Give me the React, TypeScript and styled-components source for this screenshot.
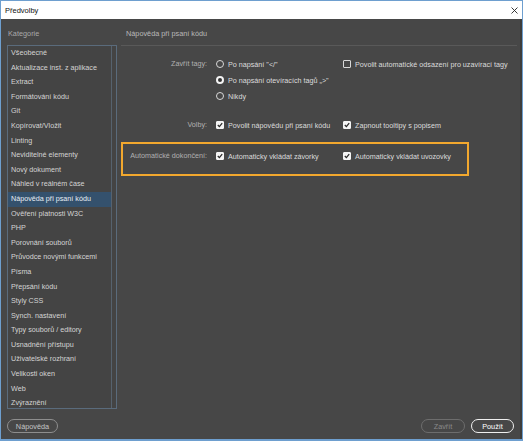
import styled, { createGlobalStyle } from "styled-components";

const GlobalStyle = createGlobalStyle`
  html, body {
    margin: 0;
    padding: 0;
    background: #474747;
  }
  body {
    font-family: "Liberation Sans", Arial, sans-serif;
  }
`;

const Window = styled.div`
  width: 523px;
  height: 441px;
  box-sizing: border-box;
  border: 1px solid #6e9fcf;
  border-bottom-width: 2px;
  display: flex;
  flex-direction: column;
  background: #474747;
`;

const TitleBar = styled.div`
  height: 18px;
  flex: none;
  background: #ffffff;
  display: flex;
  align-items: center;
  justify-content: space-between;
  padding: 0 4px;
  font-size: 7.5px;
  color: #111;
`;

const Body = styled.div`
  flex: 1;
  display: flex;
  flex-direction: column;
  padding: 7px 6px 6px 6px;
  min-height: 0;
  border-right: 2px solid #3d3d3d;
`;

const Columns = styled.div`
  display: grid;
  grid-template-columns: 110px 1fr;
  column-gap: 4px;
`;

const HeaderRow = styled(Columns)`
  height: 14px;
  margin-bottom: 5px;
  align-items: center;
  font-size: 7.3px;
  color: #a9a9a9;
`;

const CategoryTitle = styled.div`
  padding-left: 1px;
`;

const PanelTitle = styled.div`
  padding-left: 5px;
  color: #b9b9b9;
`;

const Main = styled(Columns)`
  flex: 1;
  min-height: 0;
`;

const List = styled.div`
  border: 1px solid #5a6b7c;
  box-shadow: inset -4px 0 0 #444, inset -5px 0 0 #56626e;
  background: #444444;
  overflow: hidden;
`;

const Item = styled.div<{ $selected?: boolean }>`
  height: 14.6px;
  line-height: 14.6px;
  margin-right: 5px;
  padding-left: 3px;
  font-size: 7.2px;
  white-space: nowrap;
  color: ${(p) => (p.$selected ? "#e8eef4" : "#d4d4d4")};
  background: ${(p) => (p.$selected ? "#34516d" : "transparent")};
`;

const Panel = styled.div`
  border-top: 1px solid #595959;
  padding-top: 8px;
  display: flex;
  flex-direction: column;
`;

const Row = styled.div<{ $highlight?: boolean }>`
  display: grid;
  grid-template-columns: 77px 118px 1fr;
  column-gap: 9px;
  border: 2px solid ${(p) => (p.$highlight ? "#f2a82e" : "transparent")};
  padding: ${(p) => (p.$highlight ? "4px 7px 10px" : "0 7px")};
  width: ${(p) => (p.$highlight ? "348px" : "auto")};
  box-sizing: border-box;
  margin-top: ${(p) => (p.$highlight ? "7px" : "0")};
`;

const Label = styled.div`
  text-align: right;
  font-size: 7.2px;
  line-height: 16px;
  color: #b1b1b1;
  white-space: nowrap;
`;

const Stack = styled.div`
  display: flex;
  flex-direction: column;
`;

const Option = styled.div`
  display: flex;
  align-items: center;
  height: 16px;
  gap: 4px;
  font-size: 7.2px;
  color: #dcdcdc;
  white-space: nowrap;
`;

const Spacer = styled.div`
  height: 9px;
`;

const RadioMark = styled.span<{ $on?: boolean }>`
  width: 8px;
  height: 8px;
  border-radius: 50%;
  box-sizing: border-box;
  border: ${(p) => (p.$on ? "2.5px solid #f4f4f4" : "1px solid #d8d8d8")};
  background: ${(p) => (p.$on ? "#333" : "transparent")};
  flex: none;
`;

const BoxMark = styled.span<{ $on?: boolean }>`
  width: 8px;
  height: 8px;
  border-radius: 1px;
  box-sizing: border-box;
  border: 1px solid ${(p) => (p.$on ? "#f4f4f4" : "#d8d8d8")};
  background: ${(p) => (p.$on ? "#f4f4f4" : "transparent")};
  display: flex;
  align-items: center;
  justify-content: center;
  flex: none;
`;

const Footer = styled.div`
  margin-top: 10px;
  height: 14px;
  display: flex;
  align-items: center;
  gap: 6px;
`;

const Pill = styled.button<{ $primary?: boolean; $disabled?: boolean; $w: number }>`
  width: ${(p) => p.$w}px;
  height: 14px;
  padding: 0;
  border-radius: 7px;
  background: transparent;
  font-family: inherit;
  font-size: 7.3px;
  border: ${(p) =>
    p.$primary ? "1.5px solid #f0f0f0" : p.$disabled ? "1px solid #6d6d6d" : "1px solid #8e8e8e"};
  color: ${(p) => (p.$primary ? "#ffffff" : p.$disabled ? "#8a8a8a" : "#c4c4c4")};
`;

const Grow = styled.div`
  flex: 1;
`;

const categories = [
  "Všeobecné",
  "Aktualizace inst. z aplikace",
  "Extract",
  "Formátování kódu",
  "Git",
  "Kopírovat/Vložit",
  "Linting",
  "Neviditelné elementy",
  "Nový dokument",
  "Náhled v reálném čase",
  "Nápověda při psaní kódu",
  "Ověření platnosti W3C",
  "PHP",
  "Porovnání souborů",
  "Průvodce novými funkcemi",
  "Písma",
  "Přepsání kódu",
  "Styly CSS",
  "Synch. nastavení",
  "Typy souborů / editory",
  "Usnadnění přístupu",
  "Uživatelské rozhraní",
  "Velikosti oken",
  "Web",
  "Zvýraznění",
];

function Check({ on, children }: { on?: boolean; children: string }) {
  return (
    <Option>
      <BoxMark $on={on}>
        {on && (
          <svg width="6" height="6" viewBox="0 0 6 6">
            <polyline points="0.8,3 2.4,4.6 5.2,1.2" fill="none" stroke="#2a2a2a" strokeWidth="1.3" />
          </svg>
        )}
      </BoxMark>
      {children}
    </Option>
  );
}

function Radio({ on, children }: { on?: boolean; children: string }) {
  return (
    <Option>
      <RadioMark $on={on} />
      {children}
    </Option>
  );
}

export default function App() {
  return (
    <>
      <GlobalStyle />
      <Window>
        <TitleBar>
          <span>Předvolby</span>
          <svg width="7" height="7" viewBox="0 0 7 7">
            <path d="M0.5 0.5 L6.5 6.5 M6.5 0.5 L0.5 6.5" stroke="#222" strokeWidth="0.9" />
          </svg>
        </TitleBar>
        <Body>
          <HeaderRow>
            <CategoryTitle>Kategorie</CategoryTitle>
            <PanelTitle>Nápověda při psaní kódu</PanelTitle>
          </HeaderRow>
          <Main>
            <List>
              {categories.map((c) => (
                <Item key={c} $selected={c === "Nápověda při psaní kódu"}>
                  {c}
                </Item>
              ))}
            </List>
            <Panel>
              <Row>
                <Label>Zavřít tagy:</Label>
                <Stack>
                  <Radio>Po napsání "&lt;/"</Radio>
                  <Radio on>Po napsání otevíracích tagů „&gt;"</Radio>
                  <Radio>Nikdy</Radio>
                </Stack>
                <Stack>
                  <Check>Povolit automatické odsazení pro uzavírací tagy</Check>
                </Stack>
              </Row>
              <Spacer />
              <Row>
                <Label>Volby:</Label>
                <Check on>Povolit nápovědu při psaní kódu</Check>
                <Check on>Zapnout tooltipy s popisem</Check>
              </Row>
              <Row $highlight>
                <Label>Automatické dokončení:</Label>
                <Check on>Automaticky vkládat závorky</Check>
                <Check on>Automaticky vkládat uvozovky</Check>
              </Row>
            </Panel>
          </Main>
          <Footer>
            <Pill $w={51}>Nápověda</Pill>
            <Grow />
            <Pill $w={44} $disabled>
              Zavřít
            </Pill>
            <Pill $w={43} $primary>
              Použít
            </Pill>
          </Footer>
        </Body>
      </Window>
    </>
  );
}
